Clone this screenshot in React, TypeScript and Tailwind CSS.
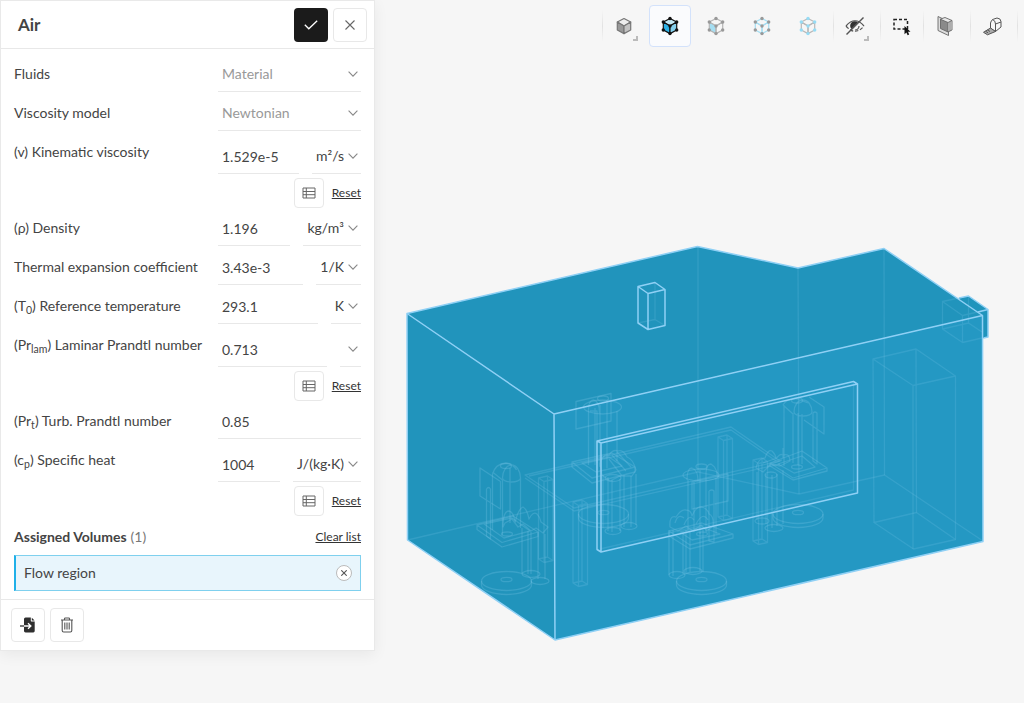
import { FC, ReactNode } from 'react';

type FieldProps = {
  id: string;
  label: ReactNode;
  name: string;
  value: string;
  unit?: string;
  resettable?: boolean;
};

const Chevron: FC = () => (
  <svg
    viewBox="0 0 10 6"
    className="pointer-events-none col-start-1 row-start-1 mr-[3px] h-[6px] w-[10px] self-center justify-self-end"
    fill="none"
    stroke="#888"
    strokeWidth="1.1"
  >
    <path d="M0.6 0.6 5 5.2 9.4 0.6" />
  </svg>
);

const TableIcon: FC = () => (
  <svg viewBox="0 0 14 12" className="h-3 w-[14px]" fill="none" stroke="#666" strokeWidth="1">
    <path d="M1 1h12v10H1zM1 4.5h12M1 7.7h12M4.3 1v10" />
  </svg>
);

const RowLabel: FC<{ htmlFor: string; children: ReactNode }> = ({ htmlFor, children }) => (
  <label htmlFor={htmlFor} className="w-51 shrink-0 pt-[11px] text-sm leading-5 whitespace-nowrap">
    {children}
  </label>
);

const SelectRow: FC<{ id: string; label: string; value: string }> = ({ id, label, value }) => (
  <div className="flex h-[39px]">
    <RowLabel htmlFor={id}>{label}</RowLabel>
    <div className="grid flex-1 border-b border-[#e8e8e8] pt-1">
      <select
        id={id}
        className="col-start-1 row-start-1 appearance-none bg-transparent px-1 text-sm leading-5 text-[#999]"
      >
        <option>{value}</option>
      </select>
      <Chevron />
    </div>
  </div>
);

const FieldRow: FC<FieldProps> = ({ id, label, name, value, unit, resettable }) => (
  <div className={resettable ? 'flex h-[76px]' : 'flex h-[39px]'}>
    <RowLabel htmlFor={id}>{label}</RowLabel>
    <div className="min-w-0 flex-1">
      <div className={resettable ? 'flex h-[43px] gap-[13px] pt-1' : 'flex h-[39px] gap-[13px]'}>
        <div className="flex min-w-0 flex-1 border-b border-[#e8e8e8] pt-[6px]">
          <input
            id={id}
            defaultValue={value}
            className="w-full min-w-0 bg-transparent px-1 text-sm leading-5 outline-none"
          />
        </div>
        {unit !== undefined && (
          <div className="grid border-b border-[#e8e8e8] pt-1">
            <select
              aria-label={`${name} unit`}
              className="col-start-1 row-start-1 field-sizing-content appearance-none bg-transparent pr-[17px] pl-1 text-right text-sm leading-5"
            >
              <option>{unit}</option>
            </select>
            <Chevron />
          </div>
        )}
      </div>
      {resettable && (
        <div className="mt-1 flex items-center justify-end gap-2">
          <button
            type="button"
            aria-label={`${name} table`}
            className="flex h-[30px] w-[30px] items-center justify-center rounded border border-[#e8e8e8]"
          >
            <TableIcon />
          </button>
          <button type="button" className="text-xs leading-5 text-[#333] underline">
            Reset
          </button>
        </div>
      )}
    </div>
  </div>
);

const MaterialPanel: FC = () => (
  <section className="w-[375px] shrink-0 self-start border border-[#e9e9e9] bg-white text-[#444] shadow-[0_4px_14px_rgba(0,0,0,0.06)]">
    <header className="flex h-12 items-center gap-[5px] border-b border-[#e8e8e8] pr-[7px] pl-[17px]">
      <h1 className="flex-1 text-[17px] leading-6 font-bold">Air</h1>
      <button
        type="button"
        aria-label="Apply"
        className="flex h-[34px] w-[34px] items-center justify-center rounded bg-[#1b1b1b]"
      >
        <svg viewBox="0 0 14 10" className="h-[10px] w-[14px]" fill="none" stroke="#fff" strokeWidth="1.3">
          <path d="M0.8 4.8 4.8 8.8 13.2 0.8" />
        </svg>
      </button>
      <button
        type="button"
        aria-label="Close"
        className="flex h-[34px] w-[34px] items-center justify-center rounded border border-[#e8e8e8]"
      >
        <svg viewBox="0 0 10 10" className="h-[10px] w-[10px]" fill="none" stroke="#666" strokeWidth="1.1">
          <path d="M0.5 0.5l9 9M9.5 0.5l-9 9" />
        </svg>
      </button>
    </header>

    <div className="px-[13px] pt-1 pb-2">
      <SelectRow id="fluids" label="Fluids" value="Material" />
      <SelectRow id="viscosity-model" label="Viscosity model" value="Newtonian" />
      <FieldRow
        id="viscosity"
        name="Kinematic viscosity"
        label="(v) Kinematic viscosity"
        value="1.529e-5"
        unit="m²/s"
        resettable
      />
      <FieldRow id="density" name="Density" label="(ρ) Density" value="1.196" unit="kg/m³" />
      <FieldRow
        id="expansion"
        name="Thermal expansion coefficient"
        label="Thermal expansion coefficient"
        value="3.43e-3"
        unit="1/K"
      />
      <FieldRow
        id="temperature"
        name="Reference temperature"
        label={
          <>
            (T<sub>0</sub>) Reference temperature
          </>
        }
        value="293.1"
        unit="K"
      />
      <FieldRow
        id="laminar"
        name="Laminar Prandtl number"
        label={
          <>
            (Pr<sub>lam</sub>) Laminar Prandtl number
          </>
        }
        value="0.713"
        unit=""
        resettable
      />
      <FieldRow
        id="turbulent"
        name="Turbulent Prandtl number"
        label={
          <>
            (Pr<sub>t</sub>) Turb. Prandtl number
          </>
        }
        value="0.85"
      />
      <FieldRow
        id="specific-heat"
        name="Specific heat"
        label={
          <>
            (c<sub>p</sub>) Specific heat
          </>
        }
        value="1004"
        unit="J/(kg·K)"
        resettable
      />

      <div className="mt-3 flex items-center">
        <h2 className="text-sm leading-5 font-bold">Assigned Volumes</h2>
        <span className="ml-1 flex-1 text-sm leading-5 text-[#777]">(1)</span>
        <button type="button" className="text-xs leading-5 text-[#333] underline">
          Clear list
        </button>
      </div>
      <div className="mt-2 flex h-9 items-center border border-l-2 border-[#7fd0ee] border-l-[#1fb0e8] bg-[#e8f5fc] pr-2 pl-2">
        <span className="flex-1 text-sm leading-5">Flow region</span>
        <button
          type="button"
          aria-label="Remove Flow region"
          className="flex h-4 w-4 items-center justify-center rounded-full border border-[#bbb] bg-white"
        >
          <svg viewBox="0 0 6 6" className="h-[6px] w-[6px]" fill="none" stroke="#555" strokeWidth="1.1">
            <path d="M0.3 0.3l5.4 5.4M5.7 0.3 0.3 5.7" />
          </svg>
        </button>
      </div>
    </div>

    <footer className="flex gap-[5px] border-t border-[#e8e8e8] px-[10px] py-2">
      <button
        type="button"
        aria-label="Import material"
        className="flex h-[34px] w-[34px] items-center justify-center rounded border border-[#e8e8e8]"
      >
        <svg viewBox="0 0 16 16" className="h-4 w-4">
          <path d="M5.5 0.5h5.3v3.2q0 .9.9.9h3V14q0 1.4-1.4 1.4H5.5Q4 15.4 4 14V2Q4 .5 5.5.5z" fill="#2f2f2f" />
          <path d="M11.8 0.7 14.6 3.6h-2.8z" fill="#2f2f2f" />
          <path d="M0 9h4" stroke="#2f2f2f" strokeWidth="1.3" />
          <path d="M4 9h6.5M8 6.2 10.9 9 8 11.8" fill="none" stroke="#fff" strokeWidth="1.3" />
        </svg>
      </button>
      <button
        type="button"
        aria-label="Delete"
        className="flex h-[34px] w-[34px] items-center justify-center rounded border border-[#e8e8e8]"
      >
        <svg viewBox="0 0 14 16" className="h-4 w-[14px]" fill="none" stroke="#555" strokeWidth="1.1">
          <path d="M1 3h12M4.5 3V1.8q0-.8.8-.8h3.400q.8 0 .8.8V3M2.200 3v10.500q0 1.500 1.500 1.500h6.600q1.500 0 1.500-1.500V3M4.800 5.500v7M7 5.500v7M9.200 5.500v7" />
        </svg>
      </button>
    </footer>
  </section>
);

type CubeProps = {
  edge: string;
  node?: string;
  left?: string;
  right?: string;
  top?: string;
};

const CubeIcon: FC<CubeProps> = ({ edge, node, left = 'none', right = 'none', top = 'none' }) => (
  <svg viewBox="0 0 24 24" className="h-6 w-6" stroke={edge} strokeWidth="1.2" strokeLinejoin="round">
    <path d="M12 4.5 18.700 8 12 12 5.300 8z" fill={top} />
    <path d="M5.300 8 12 12V19.600L5.300 16z" fill={left} />
    <path d="M18.700 8 12 12V19.600L18.700 16z" fill={right} />
    {node && (
      <g fill={node} stroke="none">
        <circle cx="12" cy="4.5" r="1.700" />
        <circle cx="5.300" cy="8" r="1.700" />
        <circle cx="18.700" cy="8" r="1.700" />
        <circle cx="12" cy="12" r="1.700" />
        <circle cx="5.300" cy="16" r="1.700" />
        <circle cx="18.700" cy="16" r="1.700" />
        <circle cx="12" cy="19.600" r="1.700" />
      </g>
    )}
  </svg>
);

const ToolButton: FC<{ label: string; active?: boolean; narrow?: boolean; menu?: boolean; children: ReactNode }> = ({
  label,
  active,
  narrow,
  menu,
  children,
}) => (
  <button
    type="button"
    aria-label={label}
    aria-pressed={active}
    className={`relative flex h-[42px] items-center justify-center rounded border ${narrow ? 'w-[38px]' : 'w-[42px]'} ${
      active ? 'border-[#d3e2fb] bg-[#fafbfd]' : 'border-transparent'
    }`}
  >
    {children}
    {menu && <span className="absolute right-[6px] bottom-[5px] h-[5px] w-[5px] border-r-2 border-b-2 border-[#bbb]" />}
  </button>
);

const Separator: FC = () => (
  <div className="ml-1 h-8 w-px bg-linear-to-b from-transparent via-[#e2e2e2] to-transparent" />
);

const Toolbar: FC = () => (
  <div className="flex h-13 items-center justify-end pr-[6px]">
    <Separator />
    <ToolButton label="Render mode" menu>
      <CubeIcon edge="#777" top="#ededed" left="#999" right="#c2c2c2" />
    </ToolButton>
    <div className="ml-1 flex gap-1">
      <ToolButton label="Select volumes" active>
        <CubeIcon edge="#111" node="#111" top="#c5e9f6" left="#2cb1e6" right="#84d0ee" />
      </ToolButton>
      <ToolButton label="Select faces">
        <CubeIcon edge="#b5b5b5" node="#999" left="#a5def2" />
      </ToolButton>
      <ToolButton label="Select edges">
        <CubeIcon edge="#a5def2" node="#999" />
      </ToolButton>
      <ToolButton label="Select vertices">
        <CubeIcon edge="#b8b8b8" node="#96dcf5" />
      </ToolButton>
    </div>
    <Separator />
    <ToolButton label="Hide selection" menu>
      <svg viewBox="0 0 24 24" className="h-6 w-6" fill="none" stroke="#555" strokeWidth="1.2">
        <path d="M3 12Q12 1.500 21 12" />
        <path d="M3 12Q12 22.500 21 12" strokeDasharray="3.500 1.800" />
        <path d="M16 12a4 4 0 0 1-4 4" />
        <path d="M8.500 15 15 8.500a4.300 4.300 0 1 0-6.500 6.500z" fill="#333" stroke="none" />
        <path d="M3.500 20.500 20.500 3.500" strokeWidth="1.400" />
      </svg>
    </ToolButton>
    <Separator />
    <ToolButton label="Box selection" narrow>
      <svg viewBox="0 0 24 24" className="h-6 w-6" fill="none">
        <path d="M6 5.500h13.500v9.500H6z" stroke="#222" strokeWidth="1.500" strokeDasharray="3 2" />
        <path d="M16.500 12v8.200l1.900-1.700 1.200 2.800 1.600-.7-1.200-2.800h2.500z" fill="#111" />
      </svg>
    </ToolButton>
    <Separator />
    <ToolButton label="Section plane">
      <svg viewBox="0 0 24 24" className="h-6 w-6" stroke="#666" strokeWidth="0.900" strokeLinejoin="round">
        <path d="M5 2.500v14l10.500 5v-14z" fill="#ddd" />
        <path d="M7.500 5 12 3.500 19 6.500v9.500L15 18z" fill="#e8e8e8" />
        <path d="M7.500 5.300v9.200L15 18V8.500z" fill="#8a8a8a" />
        <path d="M15 8.500 19 6.500M17 7.700v9.300" fill="none" />
      </svg>
    </ToolButton>
    <Separator />
    <ToolButton label="Measure">
      <svg viewBox="0 0 24 24" className="h-6 w-6" fill="none" stroke="#555" strokeWidth="1" strokeLinejoin="round">
        <path d="M10.500 14.500V9q.5-3 3-3.800l3.500-1.200q3.800.3 4 3.500v5.500L15.500 17.500z" />
        <path d="M15.500 17.500V10q0-3.500-3-4.500M15.500 10 21 8" />
        <path d="M10.500 14 3.500 18.300 7.500 20.800 15.500 17.500z" fill="#aaa" />
        <path d="M5.500 17.200 8 18.800M7.500 16 10 17.500" />
      </svg>
    </ToolButton>
    <Separator />
  </div>
);

const Stool: FC<{ x: number; y: number }> = ({ x, y }) => (
  <>
    <ellipse cx={x} cy={y} rx="25" ry="9.500" />
    <path d={`M${x - 25} ${y}v4a25 9.500 0 0 0 50 0v-4`} />
    <ellipse cx={x} cy={y - 1.5} rx="5.500" ry="2.200" />
  </>
);

const TableLeg: FC<{ x: number; y: number; height: number }> = ({ x, y, height }) => (
  <path
    d={`M${x} ${y}l9-2 5.500 3.500-9 2zv${height}l5.500 3.500 9-2v-${height}M${x + 5.5} ${y + 3.5}v${height}M${x + 9} ${y - 2}v${height}M${x} ${y + height}l9-2 5.500 3.500`}
  />
);

const FlowModel: FC = () => (
  <svg
    viewBox="375 52 649 651"
    className="block h-auto w-full"
    fill="none"
    strokeLinejoin="round"
    role="img"
    aria-label="Flow region model"
  >
    {/* Room faces */}
    <path d="M959 298 968.500 296 988 309.500V337L980 339z" fill="#2094bc" />
    <path d="M407 313.500 697.500 246.500 798 268 884 248.500 982.500 315.500 554 414 555 640 407.500 540z" fill="#2194bc" />
    <path d="M554 414 982.500 315.500 983 541.500 555 640z" fill="#2498c3" />

    {/* Room edges behind the faces */}
    <g stroke="#7cc8ea" strokeOpacity="0.200" strokeWidth="1.300">
      <path d="M698 247V472M798 268 799 494M884 249 884.500 475" />
      <path d="M407.500 540 698 472 799 494 884.500 475 983 541" />
      <path d="M873 359 916 349 955.500 376 913 385.500zM873 359 874 522.500M916 349 916.500 512.500M955.500 376V539.500M913 385.500V549" />
      <path d="M874 522.500 916.500 512.500 955.500 539.500 913.500 549z" />
      <path d="M959 298 942.500 301.500V329L962.500 342.500 982 338M942.500 301.500 962.500 315.500V342.500M962.500 315.500 982 311M968.500 296V323L942.500 329M968.500 323 982 332" />
      <path d="M853.500 383V490L600 549" />
      <path d="M638 323 655 319.500 665 325.500M655 283V319.500" />
    </g>

    {/* Table */}
    <g stroke="#7cc8ea" strokeOpacity="0.230" strokeWidth="1.300">
      <path d="M525 475 731 427 780 461 574 508zM525 478 574 511 780 464M529 476 731 430 776 461" />
      <TableLeg x={538.5} y={478} height={81} />
      <TableLeg x={573} y={502} height={81} />
      <TableLeg x={718} y={437} height={80} />
      <TableLeg x={753} y={460} height={81} />
    </g>

    {/* Seated people */}
    <g stroke="#7cc8ea" strokeOpacity="0.270" strokeWidth="1.300">
      <Stool x={506.5} y={581} />
      <Stool x={603.5} y={514} />
      <Stool x={701.5} y={581} />
      <Stool x={798} y={514} />

      <path d="M480 468 500.500 481.500V509L480 496zM486.500 489v47l4 3V489q-2-3-4 0" />
      <ellipse cx="506" cy="466" rx="5.500" ry="2.500" />
      <path d="M492.500 530V474q3-10 13-11 7 0 11 7M492.500 472l10 8v55M502.500 478a9 13 0 0 1 18 0 9 4 0 0 1-18 0M510 468v55M520.500 478v50" />
      <path d="M477 525 513 516 538 532 502 542.500zM477 525v4.500L502 547 538 536.500V532M484 524 512 518 530 531 504 538z" />
      <ellipse cx="507" cy="534" rx="5.500" ry="2" />
      <path d="M503 527q0-16 6-16 5 1 6 12 3-14 8-16 4 2 6 12 4-8 8-5 3 3 4 8l7 5-5 6-7-5-5 3-8-7-5 3-6-8-7 4z" />
      <path d="M522 528v45M528 531V574M531 532v42M538 532v47M545 534v45" />
      <ellipse cx="531" cy="574" rx="9" ry="3.500" />
      <ellipse cx="540" cy="581" rx="9" ry="3.500" />

      <path d="M576 401.500 611 393.500V421L576 429z" />
      <ellipse cx="603" cy="398.500" rx="5.500" ry="2.500" />
      <ellipse cx="602.500" cy="407" rx="19" ry="7" />
      <path d="M588.500 465V410q0-10 5-10 6 1 6 13M595 408v57M600 405v62M607 400v68M617 411v50M590 411h7v52" />
      <path d="M572 462 612 453 635 467 592 478zM572 462v5L592 483 635 472V467M582 463 609 457 622 466 596 472z" />
      <path d="M600 464q2-10 9-9 4-6 9-4 5-2 9 6 6 2 9 13l-4 6h-12l-10 5-8-6zM612 455l14 16M617 452l14 15M609 459l13 17" />
      <path d="M603 475v53M608 477v54M612 480v52M620 479v52M624 475v52M631 476V527M636 474v51" />
      <ellipse cx="613" cy="478" rx="8" ry="3.500" />
      <ellipse cx="613" cy="531" rx="8" ry="3.500" />
      <ellipse cx="629" cy="526" rx="8" ry="3.500" />

      <path d="M692 482 728 474V501L692 509zM709 491v50l5 1V491q-2-2-5 0" />
      <ellipse cx="701.500" cy="466.500" rx="5.500" ry="2.500" />
      <ellipse cx="701" cy="475" rx="18" ry="6" />
      <path d="M687 480q0-12 5-12 6 2 6 13M706 474q0-10 5-10 6 4 6 11M688 480v50M694 482v50M700 470v64M706 472v60M716 478v56" />
      <path d="M669 531 702 523 733 534 690 545zM669 531v5L690 549 733 538V534M680 532 702 527 720 534 692 540z" />
      <path d="M670 527q-1-12 6-10 5-8 10-7 5 0 6 6 4-10 10-9 6 2 7 7 5 2 4 12l-6 5-6-6-8 6-7-5-8 5zM675 523q3-10 9-5M684 525q5-12 10-5M696 524q7-13 12-4" />
      <ellipse cx="702" cy="534" rx="5.500" ry="2" />
      <path d="M669 530v45M673 530v46M683 532v42M686 530v42M690 532v40M700 532v39M703 530v42" />
      <ellipse cx="677" cy="575" rx="8" ry="3.500" />
      <ellipse cx="693" cy="571" rx="9" ry="3.500" />

      <path d="M809 397 824 407V434L804 420M813 413v48l4 3V413q-2-2-4 0" />
      <ellipse cx="797" cy="400.500" rx="5.500" ry="2.500" />
      <path d="M783 405q4-7 14-6l11 4M783 405l10 9M794 412a9 12 0 0 1 18 0 9 4 0 0 1-18 0M784 405v61M793 413v50M798 413v52M802 414v50" />
      <path d="M770 463 802 451 827 468 793 478zM770 463v3L793 480 827 471V468M778 464 802 456 815 467 794 473z" />
      <ellipse cx="797" cy="467" rx="5.500" ry="2" />
      <path d="M756 468q2-10 9-10 3-9 7-7 4 4 4 8 4-6 7-4 7-2 7 6l-10 5-9-2-8 8zM763 463l14-5M767 466l15-6M783 448v10" />
      <ellipse cx="771" cy="475" rx="6" ry="3" />
      <path d="M757 472v48M766 474v50M772 475v53M777 474v52M783 470v54" />
      <ellipse cx="762" cy="521" rx="7" ry="3" />
      <ellipse cx="774" cy="528" rx="9" ry="3.500" />
    </g>

    {/* Visible edges */}
    <g stroke="#8fd0f5" strokeWidth="1.500">
      <path d="M407 313.500 697.500 246.500 798 268 884 248.500 982.500 315.500 983 541.500 555 640 407.500 540z" />
      <path d="M407 313.500 554 414 982.500 315.500M554 414 555 640" />
      <path d="M959 298 968.500 296 988 309.500V337L983.500 338M978 312 988 309.500" />
      <path d="M638 286.500 655 282.500 665 289.500 648 293.500zM638 286.500V323L648 329.500 665 325.500V289.500M648 293.500V329.500" />
      <path d="M597 441 853.500 381.500 857.500 384 601 443zM597 441V549.500L601 552 857.500 493V384M601 443V552" />
    </g>
  </svg>
);

const App: FC = () => (
  <main className="flex min-h-screen bg-[#f6f6f6] font-['Lato',sans-serif]">
    <MaterialPanel />
    <div className="min-w-0 flex-1">
      <Toolbar />
      <FlowModel />
    </div>
  </main>
);

export default App;
